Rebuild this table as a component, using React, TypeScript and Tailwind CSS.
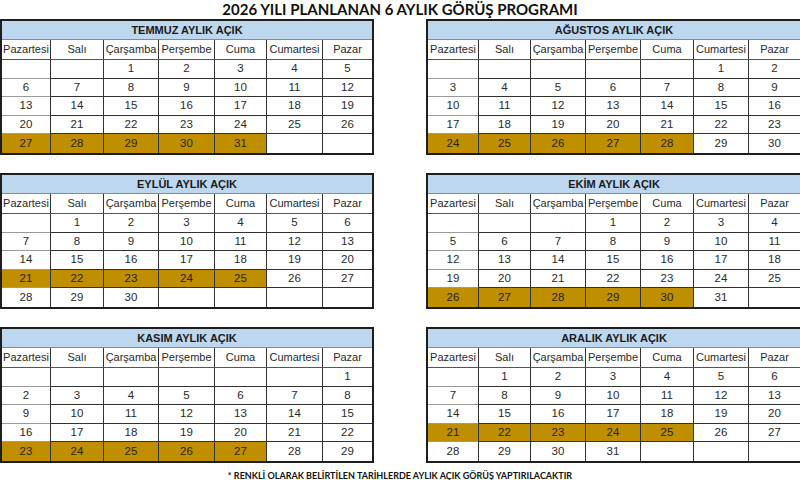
const days = ["Pazartesi", "Salı", "Çarşamba", "Perşembe", "Cuma", "Cumartesi", "Pazar"];

type Month = {
  title: string;
  start: number; // 0 = Pazartesi
  length: number;
  from: number;
  to: number;
};

const months: Month[] = [
  { title: "TEMMUZ AYLIK AÇIK", start: 2, length: 31, from: 27, to: 31 },
  { title: "AĞUSTOS AYLIK AÇIK", start: 5, length: 31, from: 24, to: 28 },
  { title: "EYLÜL AYLIK AÇIK", start: 1, length: 30, from: 21, to: 25 },
  { title: "EKİM AYLIK AÇIK", start: 3, length: 31, from: 26, to: 30 },
  { title: "KASIM AYLIK AÇIK", start: 6, length: 30, from: 23, to: 27 },
  { title: "ARALIK AYLIK AÇIK", start: 1, length: 31, from: 21, to: 25 },
];

function MonthTable({ month, right }: { month: Month; right: boolean }) {
  const cols = right
    ? "grid-cols-[50px_52px_55px_55px_53px_55px_1fr]"
    : "grid-cols-[48px_53px_55px_56px_52px_56px_1fr]";
  const cells = Array.from({ length: 35 }, (_, i) => {
    const d = i - month.start + 1;
    return d >= 1 && d <= month.length ? d : null;
  });

  return (
    <div
      className={`h-[136px] border-2 border-[#1e1e1e] bg-white flex flex-col font-['Liberation_Sans',Arial,sans-serif] text-[11px] text-[#2a2a2a] ${
        right ? "w-[376px]" : "w-[374px]"
      }`}
    >
      <div className="h-[19px] shrink-0 bg-[#bdd7ee] border-b border-[#8a8a8a] flex items-center justify-center font-bold text-[#1a1a1a]">
        {month.title}
      </div>
      <div className={`grid ${cols} h-[20px] shrink-0 border-b border-[#555]`}>
        {days.map((d, i) => (
          <div
            key={d}
            className={`flex items-center justify-center whitespace-nowrap ${i > 0 ? "border-l border-[#333]" : ""}`}
          >
            {d}
          </div>
        ))}
      </div>
      <div className={`grid ${cols} grid-rows-5 flex-1 text-[11.5px]`}>
        {cells.map((d, i) => {
          const col = i % 7;
          const row = Math.floor(i / 7);
          const gold = d !== null && d >= month.from && d <= month.to;
          return (
            <div
              key={i}
              className={`flex items-center justify-center ${col > 0 ? "border-l border-[#333]" : ""} ${
                row < 4 ? "border-b border-[#9a9a9a]" : ""
              } ${gold ? "bg-[#bf8f00] text-[#2b2200]" : ""}`}
            >
              {d ?? ""}
            </div>
          );
        })}
      </div>
    </div>
  );
}

export default function App() {
  return (
    <div className="w-[800px] h-[480px] overflow-hidden bg-white">
      <div className="h-[19px] flex items-center justify-center font-['Lato',sans-serif] font-bold text-[15px] text-[#111]">
        2026 YILI PLANLANAN 6 AYLIK GÖRÜŞ PROGRAMI
      </div>
      <div className="grid grid-cols-[374px_376px] gap-x-[52px] gap-y-[18px]">
        {months.map((m, i) => (
          <MonthTable key={m.title} month={m} right={i % 2 === 1} />
        ))}
      </div>
      <div className="mt-[8px] flex justify-center font-['Lato',sans-serif] font-bold text-[9px] leading-[9px] text-[#111]">
        * RENKLİ OLARAK BELİRTİLEN TARİHLERDE AYLIK AÇIK GÖRÜŞ YAPTIRILACAKTIR
      </div>
    </div>
  );
}
